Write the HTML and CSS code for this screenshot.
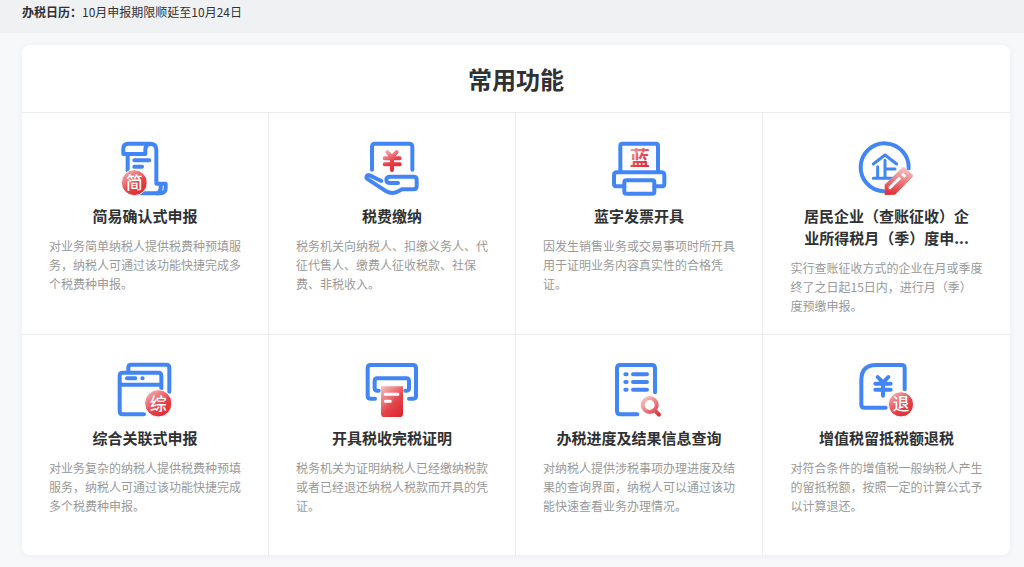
FILE: index.html
```html
<!DOCTYPE html>
<html lang="zh-CN">
<head>
<meta charset="utf-8">
<meta name="viewport" content="width=device-width, initial-scale=1">
<title>常用功能</title>
<link rel="stylesheet" href="styles.css">
</head>
<body>
<svg class="defs" aria-hidden="true">
  <defs>
    <linearGradient id="red" x1="0.1" y1="0" x2="0.8" y2="1">
      <stop offset="0" stop-color="#f6b9bb"/><stop offset="0.6" stop-color="#e4444b"/><stop offset="1" stop-color="#dc2830"/>
    </linearGradient>
    <linearGradient id="yuan" gradientUnits="userSpaceOnUse" x1="90" y1="60" x2="125" y2="122">
      <stop offset="0" stop-color="#f6b9bb"/><stop offset="0.55" stop-color="#e8414c"/><stop offset="1" stop-color="#e62433"/>
    </linearGradient>
    <linearGradient id="pencil" gradientUnits="userSpaceOnUse" x1="150" y1="110" x2="130" y2="195">
      <stop offset="0" stop-color="#f6c4c6"/><stop offset="1" stop-color="#de3038"/>
    </linearGradient>
    <linearGradient id="lens" gradientUnits="userSpaceOnUse" x1="120" y1="135" x2="168" y2="190">
      <stop offset="0" stop-color="#f8cccd"/><stop offset="1" stop-color="#dc2f36"/>
    </linearGradient>
  </defs>
</svg>
<header class="notice"><strong>办税日历：</strong>10月申报期限顺延至10月24日</header>
<main class="panel">
  <h1 class="panel-title">常用功能</h1>
  <div class="grid">
    <article class="item">
      <svg class="icon" viewBox="24 33 162 162" aria-hidden="true">
        <path d="M53 72H40V56Q40 41 55 41H120Q139 41 139 60V161H167V174Q167 190 151 190H85"/>
        <path d="M53 72H106V60Q106 43 122 42M53 72V122M152 163V174Q152 186 142 190"/>
        <path d="M73 91H118M73 110H96"/>
        <circle class="badge" cx="73" cy="158" r="39"/>
        <text class="badge-text" x="73" y="176" font-size="50">简</text>
      </svg>
      <h2 class="name">简易确认式申报</h2>
      <p class="desc">对业务简单纳税人提供税费种预填服务，纳税人可通过该功能快捷完成多个税费种申报。</p>
    </article>
    <article class="item">
      <svg class="icon" viewBox="30 33 162 162" aria-hidden="true">
        <path d="M51 119V51Q51 41 61 41H162Q172 41 172 51V119"/>
        <path d="M79 153L44 136C34 133 31 143 39 148L94 184Q112 194 130 184L141 178H176Q185 178 185 169V149Q185 140 176 140H103C91 140 91 158 103 159H129"/>
        <path class="yuan" d="M97 66L111 82L125 66M89 85H134M89 103H134M111 84V120"/>
      </svg>
      <h2 class="name">税费缴纳</h2>
      <p class="desc">税务机关向纳税人、扣缴义务人、代征代售人、缴费人征收税款、社保费、非税收入。</p>
    </article>
    <article class="item">
      <svg class="icon" viewBox="24 33 162 162" aria-hidden="true">
        <path d="M49 126V47Q49 41 55 41H156Q162 41 162 47V126"/>
        <path d="M61 169H38Q30 169 30 161V136Q30 127 39 127H172Q181 127 181 136V161Q181 169 173 169H151"/>
        <rect x="61" y="151" width="90" height="40" rx="6"/>
        <text class="red-text" x="107" y="107" font-size="60">蓝</text>
      </svg>
      <h2 class="name">蓝字发票开具</h2>
      <p class="desc">因发生销售业务或交易事项时所开具用于证明业务内容真实性的合格凭证。</p>
    </article>
    <article class="item">
      <svg class="icon" viewBox="27 33 162 162" aria-hidden="true">
        <path d="M97 184A72 72 0 1 1 173 115"/>
        <path class="thin" d="M67 102L102 75L137 102M102 91V143M80 110V143M104 117H132M67 145H137"/>
        <path fill="url(#pencil)" stroke="none" d="M101 164L153 113Q158 109 163 114L185 134Q188 138 184 142L132 194L101 195Z"/>
        <path class="white-line" d="M117 173L145 145M156 134L160 138"/>
      </svg>
      <h2 class="name">居民企业（查账征收）企业所得税月（季）度申...</h2>
      <p class="desc">实行查账征收方式的企业在月或季度终了之日起15日内，进行月（季）度预缴申报。</p>
    </article>
    <article class="item">
      <svg class="icon" viewBox="24 33 162 162" aria-hidden="true">
        <path d="M55 60V47Q55 38 64 38H169Q178 38 178 47V119"/>
        <path d="M102 187H38Q29 187 29 178V71Q29 62 38 62H145Q154 62 154 71V110M29 98H154"/>
        <path d="M51 79H76M97 79H98"/>
        <circle class="badge" cx="145" cy="154" r="41"/>
        <text class="badge-text" x="145" y="173" font-size="50">综</text>
      </svg>
      <h2 class="name">综合关联式申报</h2>
      <p class="desc">对业务复杂的纳税人提供税费种预填服务，纳税人可通过该功能快捷完成多个税费种申报。</p>
    </article>
    <article class="item">
      <svg class="icon" viewBox="30 33 162 162" aria-hidden="true">
        <path d="M60 140H46Q38 140 38 132V48Q38 39 47 39H174Q183 39 183 48V132Q183 140 175 140H162"/>
        <path d="M71 116H66Q59 116 59 109V87Q59 79 67 79H154Q162 79 162 87V109Q162 116 155 116H151"/>
        <path fill="url(#red)" stroke="none" d="M78 103H144V185Q144 195 134 195H88Q78 195 78 185Z"/>
        <path class="white-line" d="M91 127H129M91 148H106"/>
      </svg>
      <h2 class="name">开具税收完税证明</h2>
      <p class="desc">税务机关为证明纳税人已经缴纳税款或者已经退还纳税人税款而开具的凭证。</p>
    </article>
    <article class="item">
      <svg class="icon" viewBox="27 33 162 162" aria-hidden="true">
        <path d="M103 187H52Q42 187 42 177V49Q42 39 52 39H146Q156 39 156 49V121"/>
        <path d="M67 67H71M90 67H132M67 90H71M90 90H132M67 113H71M90 113H132"/>
        <path class="lens" d="M154 174L168 188"/>
        <circle class="lens" cx="140" cy="159" r="21"/>
      </svg>
      <h2 class="name">办税进度及结果信息查询</h2>
      <p class="desc">对纳税人提供涉税事项办理进度及结果的查询界面，纳税人可以通过该功能快速查看业务办理情况。</p>
    </article>
    <article class="item">
      <svg class="icon" viewBox="27 33 162 162" aria-hidden="true">
        <path d="M104 167H40Q31 167 31 158V84Q31 39 76 39H152Q161 39 161 48V112"/>
        <path d="M80 75L96 92L112 75M73 95H119M73 113H119M96 93V131"/>
        <circle class="badge" cx="150" cy="157" r="38"/>
        <text class="badge-text" x="150" y="175" font-size="50">退</text>
      </svg>
      <h2 class="name">增值税留抵税额退税</h2>
      <p class="desc">对符合条件的增值税一般纳税人产生的留抵税额，按照一定的计算公式予以计算退还。</p>
    </article>
  </div>
</main>
</body>
</html>
```
FILE: styles.css
```css
* { box-sizing: border-box; }
body {
  margin: 0;
  background: #f7f8fa;
  color: #303133;
  font-family: "Noto Sans CJK SC", sans-serif;
  font-size: 12px;
}
.defs { position: absolute; width: 0; height: 0; }
.notice {
  padding: 2px 22px 11px;
  background: #f0f1f3;
  line-height: 20px;
}
.panel {
  margin: 12px 14px 12px 22px;
  background: #fff;
  border-radius: 8px;
  box-shadow: 0 1px 6px rgba(40, 50, 80, 0.06);
}
.panel-title {
  margin: 0;
  padding: 16px 0 15px;
  border-bottom: 1px solid #ebecee;
  font-size: 24px;
  line-height: 36px;
  text-align: center;
}
.grid {
  display: grid;
  grid-template-columns: repeat(4, 1fr);
}
.item {
  display: flex;
  flex-direction: column;
  align-items: center;
  min-height: 222px;
  padding: 28px 27px 16px;
  border-right: 1px solid #ebecee;
  border-bottom: 1px solid #ebecee;
}
.item:nth-child(4n) { border-right: 0; }
.item:nth-last-child(-n+4) {
  min-height: 220px;
  border-bottom: 0;
}
.icon {
  width: 54px;
  height: 54px;
  overflow: visible;
  fill: none;
  stroke: #4285f4;
  stroke-width: 12px;
  stroke-linecap: round;
  stroke-linejoin: round;
}
.icon .thin { stroke-width: 9px; }
.icon .yuan { stroke: url(#yuan); }
.icon .lens { stroke: url(#lens); }
.icon .white-line { stroke: #fff; stroke-width: 9px; }
.icon .badge { fill: url(#red); stroke: #fff; stroke-width: 3px; }
.icon text { stroke: none; text-anchor: middle; }
.badge-text { fill: #fff; font-weight: 500; }
.red-text { fill: url(#red); font-weight: 700; }
.name {
  max-width: 172px;
  margin: 10px 0 9px;
  font-size: 15px;
  line-height: 22px;
  text-align: center;
}
.desc {
  width: 100%;
  max-width: 192px;
  margin: 0;
  color: #999;
  line-height: 19px;
}
```
